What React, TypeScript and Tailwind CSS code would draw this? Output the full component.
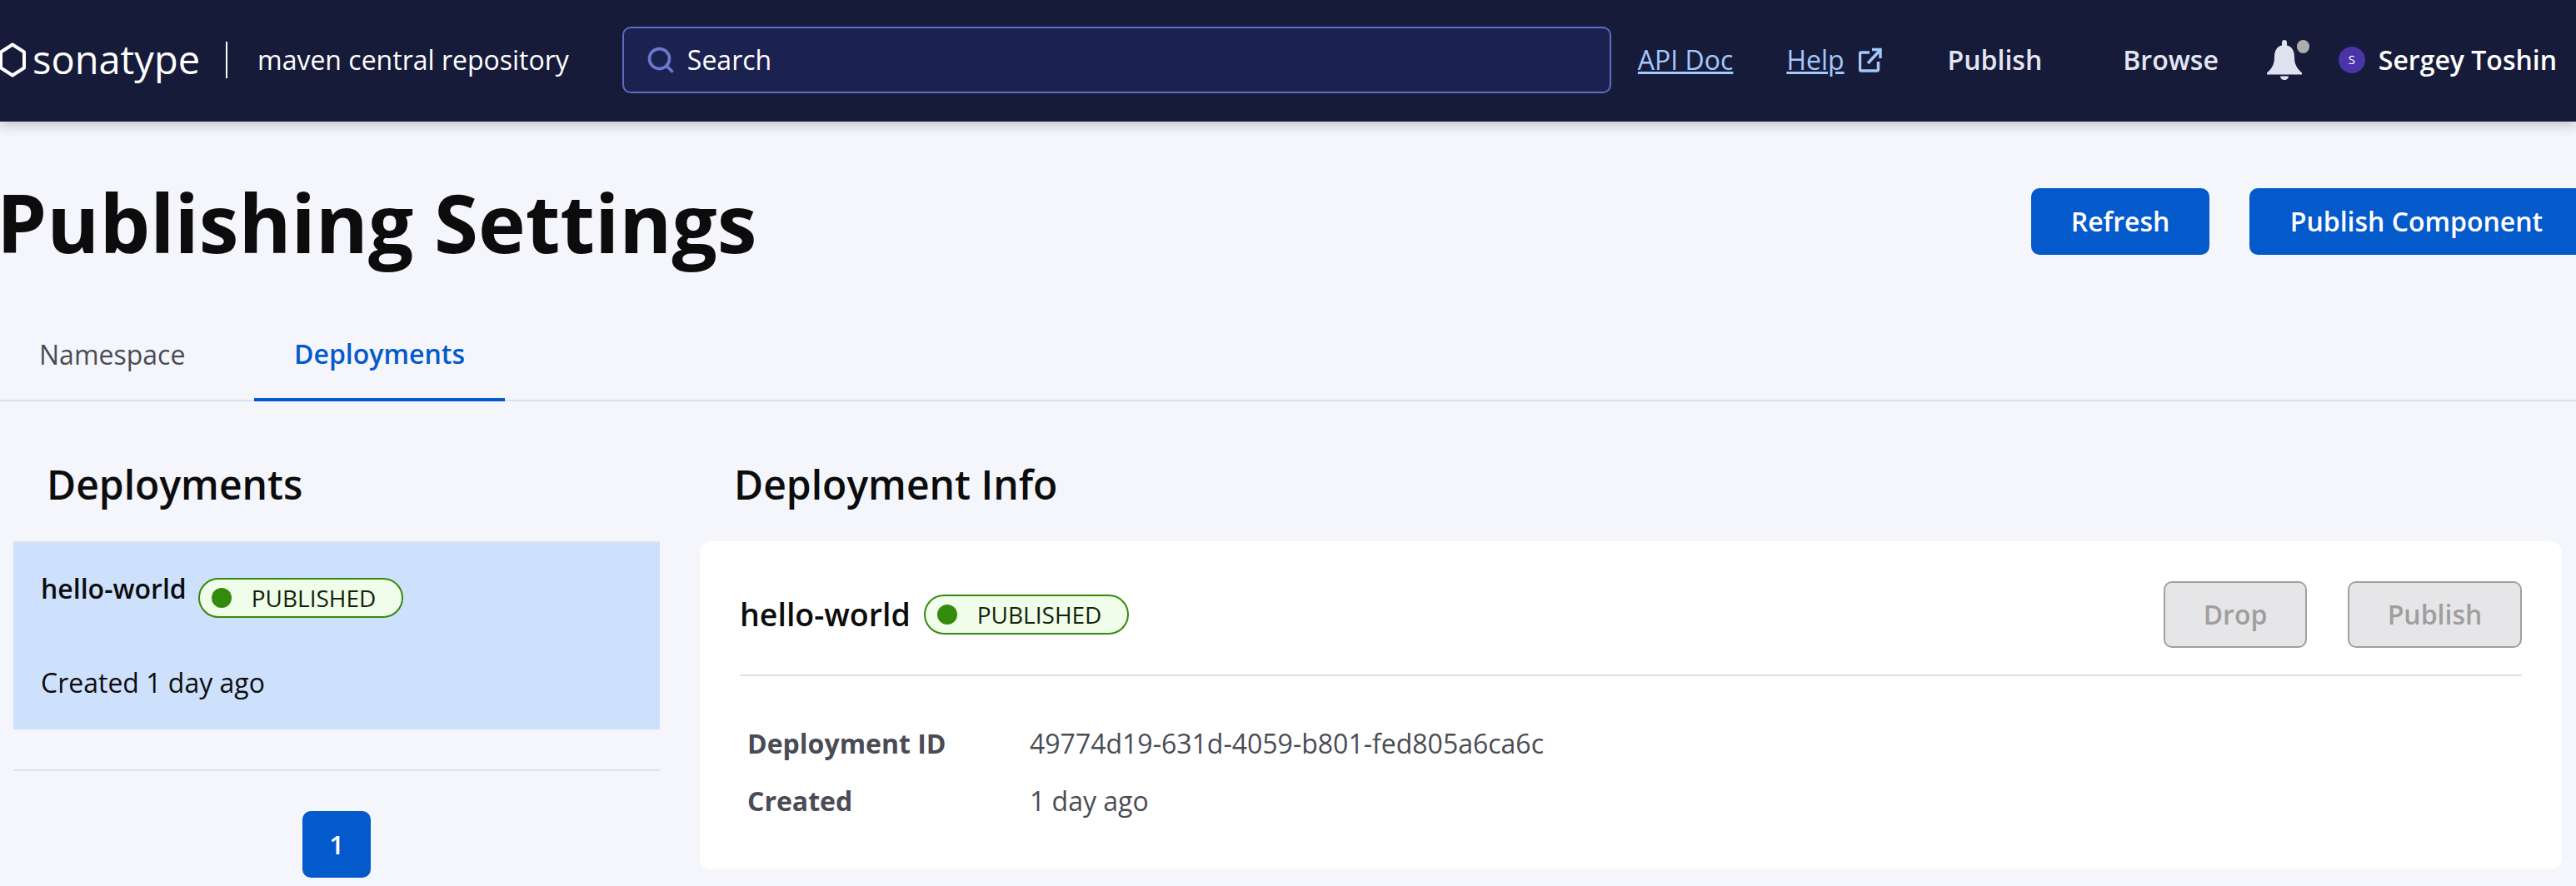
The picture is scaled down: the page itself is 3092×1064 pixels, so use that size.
import { Search } from "lucide-react";

const font = { fontFamily: '"Open Sans", sans-serif' };

function HexLogo() {
  return (
    <svg width="32" height="42" viewBox="0 0 32 42" fill="none" className="shrink-0">
      <path d="M15 2.5 29 11.5V30.5L15 39.5 1 30.5V11.5Z" stroke="#fff" strokeWidth="4" strokeLinejoin="round" />
    </svg>
  );
}

function ExternalLink() {
  return (
    <svg width="28" height="30" viewBox="0 0 28 30" fill="none" stroke="#a3c8fa" strokeWidth="3.5">
      <path d="M13 6H3a1.500 1.500 0 0 0-1.500 1.500V26.500A1.500 1.500 0 0 0 3 28H22a1.500 1.500 0 0 0 1.500-1.500V17" />
      <path d="M11 19 25 4" />
      <path d="M16 2.500H26V13" />
    </svg>
  );
}

function Bell() {
  return (
    <div className="relative h-[48px] w-[51px] shrink-0">
      <svg width="42" height="48" viewBox="0 0 42 48" fill="#dfe2f0">
        <path d="M21 0c1.800 0 3 1.300 3 3v3.500c6.500 1.500 9 7 9 14 0 9 3 13.500 9 19v2H0v-2c6-5.500 9-10 9-19 0-7 2.500-12.500 9-14V3c0-1.700 1.200-3 3-3Z" />
        <path d="M16 43.500h10c0 2.500-2 4.500-5 4.500s-5-2-5-4.500Z" />
      </svg>
      <span className="absolute right-0 top-0 h-[16px] w-[15px] rounded-full bg-[#adadad]" />
    </div>
  );
}

function Badge() {
  return (
    <span className="flex h-[48px] w-[246px] shrink-0 items-center rounded-full border-2 border-[#348a0b] bg-[#effdea] pl-[14px] text-[28px] text-[#12240a]">
      <span className="h-[24px] w-[24px] rounded-full bg-[#348a0b]" />
      <span className="ml-[24px]">PUBLISHED</span>
    </span>
  );
}

function Header() {
  return (
    <header className="relative z-10 flex h-[146px] items-center bg-[#161b3a] pb-[3px] text-[32px] text-white shadow-[0_4px_14px_rgba(0,0,0,0.22)]">
      <HexLogo />
      <span className="ml-[7px] w-[200px] text-[47px] leading-none">sonatype</span>
      <span className="ml-[32px] h-[44px] w-[2px] bg-white" />
      <span className="ml-[36px]">maven central repository</span>
      <div className="ml-[64px] flex h-[80px] w-[1187px] items-center rounded-[10px] border-2 border-[#5f6cc0] bg-[#1c2250] pl-[26px]">
        <Search size={36} strokeWidth={2.5} color="#6b78cc" className="shrink-0" />
        <span className="ml-[14px]">Search</span>
      </div>
      <a className="ml-[32px] text-[#a3c8fa] underline">API Doc</a>
      <a className="ml-[64px] text-[#a3c8fa] underline">Help</a>
      <span className="ml-[17px]"><ExternalLink /></span>
      <span className="ml-[79px] font-semibold text-[#e4e6f2]">Publish</span>
      <span className="ml-[97px] font-semibold text-[#e4e6f2]">Browse</span>
      <span className="ml-[58px]"><Bell /></span>
      <span className="ml-[35px] flex h-[32px] w-[32px] shrink-0 items-center justify-center rounded-full bg-[#4a34a8] text-[15px]">S</span>
      <span className="ml-[16px] whitespace-nowrap font-semibold">Sergey Toshin</span>
    </header>
  );
}

export default function App() {
  return (
    <div className="h-[1064px] w-[3092px] overflow-hidden bg-[#f4f6fb]" style={font}>
      <Header />

      <div className="flex h-[230px] items-start pt-[80px]">
        <h1 className="-ml-[4px] -mt-[24px] flex-1 text-[96px] font-bold leading-[130px] text-[#0c0c0d]">Publishing Settings</h1>
        <button className="h-[80px] w-[214px] rounded-[10px] bg-[#055acb] text-[32px] font-semibold text-white">Refresh</button>
        <button className="-mr-[9px] ml-[48px] h-[80px] w-[401px] rounded-[10px] bg-[#055acb] text-[32px] font-semibold text-white">Publish Component</button>
      </div>

      <nav className="flex h-[106px] border-b-2 border-[#dfe0ee] text-[32px]">
        <span className="flex w-[305px] items-center pb-[4px] pl-[47px] text-[#4a4c55]">Namespace</span>
        <span className="-mb-[2px] flex w-[301px] items-center justify-center border-b-4 border-[#055acb] pb-[4px] font-semibold text-[#055acb]">Deployments</span>
      </nav>

      <div className="flex pl-[16px] pt-[56px]">
        <section className="w-[776px] shrink-0">
          <h2 className="h-[112px] pl-[40px] text-[48px] font-semibold leading-[88px] text-[#0c0c0d]">Deployments</h2>
          <div className="h-[226px] border-t-2 border-[#dfe0ee] bg-[#cde1fd] px-[33px] text-[32px] text-[#0c0c0d]">
            <div className="flex items-start pt-[34px]">
              <span className="font-semibold leading-[42px]">hello-world</span>
              <span className="ml-[14px] mt-[8px]"><Badge /></span>
            </div>
            <p className="mt-[57px] leading-[42px]">Created 1 day ago</p>
          </div>
          <div className="mt-[48px] border-t-2 border-[#dfe0ee] pt-[48px]">
            <button className="mx-auto block h-[80px] w-[82px] rounded-[10px] bg-[#055acb] text-[31px] font-semibold text-white">1</button>
          </div>
        </section>

        <section className="ml-[48px] w-[2235px] shrink-0">
          <h2 className="h-[112px] pl-[41px] text-[48px] font-semibold leading-[88px] text-[#0c0c0d]">Deployment Info</h2>
          <div className="h-[394px] rounded-[14px] bg-white px-[48px]">
            <div className="flex h-[162px] items-center border-b-2 border-[#dfe0ee] pt-[16px]">
              <span className="text-[37.5px] font-semibold text-[#0c0c0d]">hello-world</span>
              <span className="ml-[16px]"><Badge /></span>
              <span className="flex-1" />
              <button className="h-[80px] w-[172px] rounded-[10px] border-2 border-[#a0a0a0] bg-[#e6e6e8] text-[32px] font-semibold text-[#9e9e9e]">Drop</button>
              <button className="ml-[49px] h-[80px] w-[209px] rounded-[10px] border-2 border-[#a0a0a0] bg-[#e6e6e8] text-[32px] font-semibold text-[#9e9e9e]">Publish</button>
            </div>
            <dl className="grid grid-cols-[339px_1fr] gap-y-[27px] pl-[9px] pt-[60px] text-[32px] leading-[42px] text-[#4a4c55]">
              <dt className="font-bold">Deployment ID</dt>
              <dd>49774d19-631d-4059-b801-fed805a6ca6c</dd>
              <dt className="font-bold">Created</dt>
              <dd>1 day ago</dd>
            </dl>
          </div>
        </section>
      </div>
    </div>
  );
}
